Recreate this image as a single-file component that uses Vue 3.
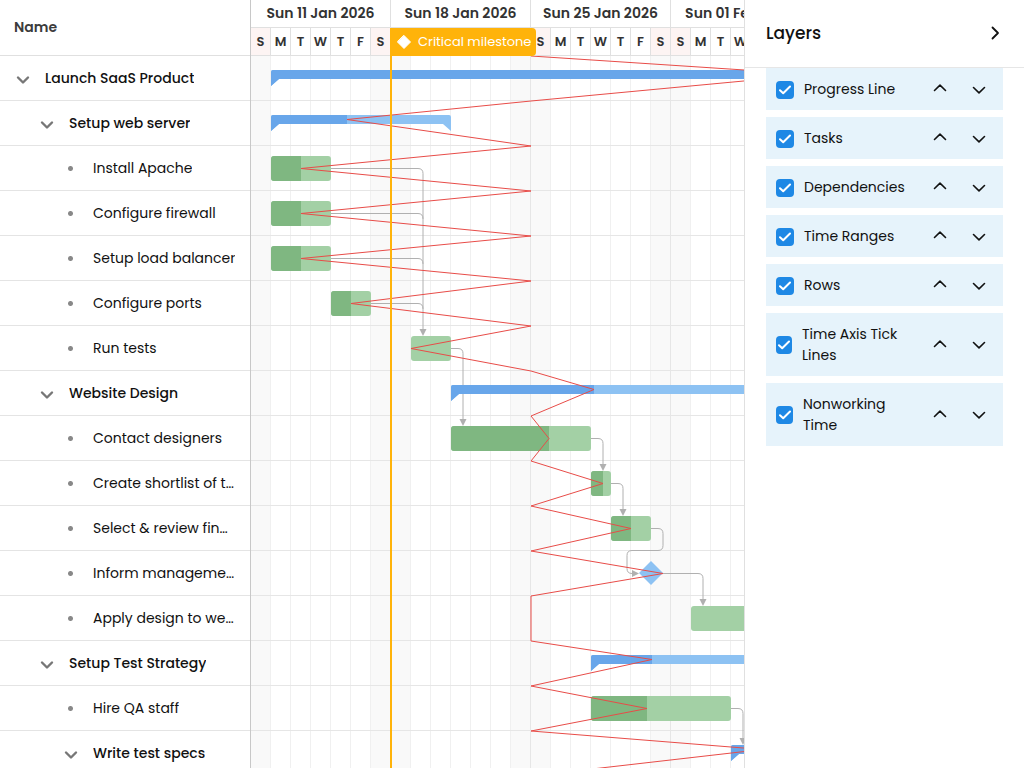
<script setup>
import { ref } from 'vue'

const rowHeight = 45
const dayWidth = 20

const rows = [
  { name: 'Launch SaaS Product', level: 0, parent: true, start: 20, width: 1100, done: 542 },
  { name: 'Setup web server', level: 1, parent: true, start: 20, width: 180, done: 76 },
  { name: 'Install Apache', level: 2, start: 20, width: 60, done: 30 },
  { name: 'Configure firewall', level: 2, start: 20, width: 60, done: 30 },
  { name: 'Setup load balancer', level: 2, start: 20, width: 60, done: 30 },
  { name: 'Configure ports', level: 2, start: 80, width: 40, done: 20 },
  { name: 'Run tests', level: 2, start: 160, width: 40, done: 0 },
  { name: 'Website Design', level: 1, parent: true, start: 200, width: 600, done: 143 },
  { name: 'Contact designers', level: 2, start: 200, width: 140, done: 98 },
  { name: 'Create shortlist of t…', level: 2, start: 340, width: 20, done: 12 },
  { name: 'Select & review fin…', level: 2, start: 360, width: 40, done: 20 },
  { name: 'Inform manageme…', level: 2, milestone: true, start: 400, width: 0, done: 12 },
  { name: 'Apply design to we…', level: 2, start: 440, width: 160, done: 0, noLine: true },
  { name: 'Setup Test Strategy', level: 1, parent: true, start: 340, width: 600, done: 61 },
  { name: 'Hire QA staff', level: 2, start: 340, width: 140, done: 56 },
  { name: 'Write test specs', level: 2, parent: true, start: 480, width: 300, done: 31 }
]

const weeks = ['Sun 11 Jan 2026', 'Sun 18 Jan 2026', 'Sun 25 Jan 2026', 'Sun 01 Feb 2026']
const days = weeks.flatMap(() => ['S', 'M', 'T', 'W', 'T', 'F', 'S'])
const isWeekend = (i) => i % 7 === 0 || i % 7 === 6
const bodyHeight = rows.length * rowHeight

const statusX = 280
const progressPoints = rows
  .flatMap((row, i) => {
    const top = i * rowHeight
    const first = [statusX, top]
    if (row.noLine) return [first]
    return [first, [row.start + row.done, top + (row.parent ? 18.5 : 22.5)]]
  })
  .concat([[statusX, bodyHeight]])
  .map((p) => p.join(','))
  .join(' ')

function summaryPath(row, i) {
  const x = row.start
  const y = i * rowHeight + 14
  const r = x + row.width
  return `M${x} ${y + 16}V${y + 2}q0-2 2-2H${r - 2}q2 0 2 2V${y + 16}l-8-7H${x + 8}Z`
}

// Links with "joins" merge into a vertical that an earlier link already draws.
const dropLinks = [
  { x: 80, row: 2, to: 172, end: 280 },
  { x: 80, row: 3, to: 172, joins: true },
  { x: 80, row: 4, to: 172, joins: true },
  { x: 120, row: 5, to: 172, joins: true },
  { x: 200, row: 6, to: 212, end: 370 },
  { x: 340, row: 8, to: 352, end: 415 },
  { x: 360, row: 9, to: 372, end: 460 },
  { x: 412, row: 11, to: 452, end: 550 },
  { x: 480, row: 14, to: 492, end: 689 }
]
const linkPath = (l) =>
  `M${l.x} ${l.row * rowHeight + 22.5}H${l.to - 5}q5 0 5 5` + (l.joins ? '' : `V${l.end - 6}`)

const layers = ref([
  { name: 'Progress Line', on: true, box: 18 },
  { name: 'Tasks', on: true, box: 18 },
  { name: 'Dependencies', on: true, box: 18 },
  { name: 'Time Ranges', on: true, box: 18 },
  { name: 'Rows', on: true, box: 18 },
  { name: 'Time Axis Tick Lines', on: true, box: 16 },
  { name: 'Nonworking Time', on: true, box: 17 }
])

function move(index, by) {
  const target = index + by
  if (target < 0 || target >= layers.value.length) return
  const [item] = layers.value.splice(index, 1)
  layers.value.splice(target, 0, item)
}
</script>

<template>
  <div class="app">
    <table class="tree">
      <thead>
        <tr><th scope="col">Name</th></tr>
      </thead>
      <tbody>
        <tr v-for="row in rows" :key="row.name">
          <td>
            <div class="cell" :class="'level' + row.level">
              <button v-if="row.parent" class="toggle" type="button" :aria-label="'Collapse ' + row.name">
                <svg width="14" height="10" viewBox="0 0 14 10"><path d="M2 2.5 7 7.5 12 2.5" /></svg>
              </button>
              <span v-else class="bullet"></span>
              <span class="name" :class="{ strong: row.parent }">{{ row.name }}</span>
            </div>
          </td>
        </tr>
      </tbody>
    </table>

    <main class="timeline">
      <div class="axis">
        <div class="weeks">
          <div v-for="week in weeks" :key="week" class="week">{{ week }}</div>
        </div>
        <div class="days">
          <div v-for="(day, i) in days" :key="i" class="day" :class="{ off: isWeekend(i) }">{{ day }}</div>
        </div>
      </div>
      <svg class="chart" :height="bodyHeight" width="100%">
        <g>
          <template v-for="(day, i) in days" :key="i">
            <rect v-if="isWeekend(i)" class="nonworking" :x="i * dayWidth" y="0" :width="dayWidth" :height="bodyHeight" />
          </template>
          <rect v-for="(day, i) in days" :key="'t' + i" :class="i % 7 === 6 ? 'major' : 'minor'" :x="(i + 1) * dayWidth - 1" y="0" width="1" :height="bodyHeight" />
          <rect v-for="(row, i) in rows" :key="'r' + i" class="major" x="0" :y="(i + 1) * rowHeight - 1" width="100%" height="1" />
        </g>
        <g class="links">
          <template v-for="l in dropLinks" :key="l.row">
            <path class="link" :d="linkPath(l)" />
            <path v-if="!l.joins" class="head" :d="`M${l.to - 3.5} ${l.end - 7}h7l-3.5 7z`" />
          </template>
          <path class="link" d="M400 472.5h7q5 0 5 5v12q0 5-5 5h-26q-5 0-5 5v13q0 5 5 5h2" />
          <path class="head" d="M381 514v7l7-3.5z" />
        </g>
        <g v-for="(row, i) in rows" :key="row.name">
          <template v-if="row.parent">
            <clipPath :id="'summary' + i"><path :d="summaryPath(row, i)" /></clipPath>
            <path class="summary" :d="summaryPath(row, i)" />
            <rect class="summary-done" :clip-path="`url(#summary${i})`" :x="row.start" :y="i * rowHeight + 14" :width="row.done" height="16" />
          </template>
          <path v-else-if="row.milestone" class="summary" :d="`M${row.start - 12} ${i * rowHeight + 22}l12-12 12 12-12 12z`" />
          <template v-else>
            <clipPath :id="'task' + i"><rect :x="row.start" :y="i * rowHeight + 10" :width="row.width" height="25" rx="3" /></clipPath>
            <rect class="task" :x="row.start" :y="i * rowHeight + 10" :width="row.width" height="25" rx="3" />
            <rect class="task-done" :clip-path="`url(#task${i})`" :x="row.start" :y="i * rowHeight + 10" :width="row.done" height="25" />
          </template>
        </g>
        <polyline class="progress" :points="progressPoints" />
      </svg>
      <div class="marker">
        <div class="marker-label">
          <svg width="14" height="14" viewBox="0 0 14 14"><path d="M7 0.5 13.5 7 7 13.5 0.5 7Z" fill="#fff" stroke="#fff" stroke-linejoin="round" /></svg>
          <span>Critical milestone</span>
        </div>
      </div>
    </main>

    <aside class="panel">
      <header class="panel-head">
        <h2>Layers</h2>
        <button class="icon" type="button" aria-label="Collapse panel">
          <svg width="10" height="14" viewBox="0 0 10 14"><path d="M2.5 1.5 8 7 2.5 12.5" /></svg>
        </button>
      </header>
      <ul class="layers">
        <li v-for="(layer, i) in layers" :key="layer.name">
          <label>
            <span class="check" :style="{ width: layer.box + 'px' }">
              <input v-model="layer.on" type="checkbox" />
              <svg v-if="layer.on" width="12" height="10" viewBox="0 0 12 10"><path d="M1 5.2 4.2 8.2 11 1.5" /></svg>
            </span>
            <span class="layer-name">{{ layer.name }}</span>
          </label>
          <button class="icon up" type="button" :aria-label="'Move up ' + layer.name" @click="move(i, -1)">
            <svg width="14" height="8" viewBox="0 0 14 8"><path d="M1.5 6.5 7 1.2 12.5 6.5" /></svg>
          </button>
          <button class="icon" type="button" :aria-label="'Move down ' + layer.name" @click="move(i, 1)">
            <svg width="14" height="8" viewBox="0 0 14 8"><path d="M1.5 1.5 7 6.8 12.5 1.5" /></svg>
          </button>
        </li>
      </ul>
    </aside>
  </div>
</template>

<style>
body {
  margin: 0;
  overflow: hidden;
}
</style>

<style scoped>
.app {
  display: flex;
  height: 100vh;
  overflow: hidden;
  background: #fff;
  color: #111;
  font-family: Poppins, Inter, "Open Sans", sans-serif;
  font-size: 14px;
}
.app * {
  box-sizing: border-box;
}
button {
  display: flex;
  align-items: center;
  justify-content: center;
  padding: 0;
  border: 0;
  background: none;
  color: inherit;
  cursor: pointer;
}
svg path {
  stroke-linecap: round;
  stroke-linejoin: round;
}

.tree {
  display: block;
  flex: none;
  width: 251px;
  border-right: 1px solid #c8c8c8;
  border-spacing: 0;
}
.tree thead,
.tree tbody,
.tree tr,
.tree td {
  display: block;
}
.tree th {
  display: flex;
  align-items: center;
  height: 56px;
  padding: 0 14px;
  border-bottom: 1px solid #e0e0e0;
  color: #3c3c3c;
  font-size: 14px;
  font-weight: 600;
}
.tree td {
  height: 45px;
  padding: 0;
  border-bottom: 1px solid #e4e4e4;
}
.cell {
  display: flex;
  align-items: center;
  gap: 15px;
  height: 45px;
  padding-right: 8px;
}
.level0 {
  padding-left: 15px;
}
.level1 {
  padding-left: 39px;
}
.level2 {
  padding-left: 63px;
}
.toggle {
  flex: none;
  width: 15px;
  height: 20px;
  padding-top: 2px;
}
.toggle path {
  fill: none;
  stroke: #777;
  stroke-width: 2.4;
}
.bullet {
  flex: none;
  width: 15px;
  height: 5px;
  background: radial-gradient(circle, #888 1px, #888 2px, transparent 3px) center no-repeat;
}
.name {
  overflow: hidden;
  line-height: 21px;
  white-space: nowrap;
}
.strong {
  font-weight: 500;
}

.timeline {
  position: relative;
  flex: 1;
  min-width: 0;
  overflow: hidden;
}
.axis {
  height: 56px;
  color: #333;
  font-weight: 600;
}
.weeks,
.days {
  display: flex;
  height: 28px;
  border-bottom: 1px solid #e0e0e0;
}
.week {
  display: flex;
  flex: none;
  align-items: center;
  justify-content: center;
  width: 140px;
  border-right: 1px solid #e0e0e0;
  font-size: 14px;
  white-space: nowrap;
}
.day {
  display: flex;
  flex: none;
  align-items: center;
  justify-content: center;
  width: 20px;
  border-right: 1px solid #e0e0e0;
  font-size: 13px;
}
.off {
  background: #fdf4f3;
}
.chart {
  display: block;
}
.nonworking {
  fill: #f9f9f9;
}
.minor {
  fill: #f0f0f0;
}
.major {
  fill: #e6e6e6;
}
.link {
  fill: none;
  stroke: #b0b0b0;
}
.head {
  fill: #b0b0b0;
}
.summary {
  fill: #8dc2f3;
}
.summary-done {
  fill: #68a6ea;
}
.task {
  fill: #a3d0a5;
}
.task-done {
  fill: #7fb781;
}
.progress {
  fill: none;
  stroke: #e84c48;
}
.marker {
  position: absolute;
  top: 28px;
  bottom: 0;
  left: 139px;
  border-left: 2px solid #ffb30a;
}
.marker-label {
  display: flex;
  align-items: center;
  gap: 7px;
  height: 28px;
  padding: 0 5px;
  border-radius: 0 4px 4px 0;
  background: #ffb30a;
  color: #fff;
  font-size: 13px;
  white-space: nowrap;
}

.panel {
  flex: none;
  width: 280px;
  border-left: 1px solid #e0e0e0;
  background: #fff;
}
.panel-head {
  display: flex;
  align-items: center;
  justify-content: space-between;
  height: 68px;
  padding: 0 21px 2px;
  border-bottom: 1px solid #e6e6e6;
}
h2 {
  margin: 0;
  font-size: 17px;
  font-weight: 500;
}
.icon {
  flex: none;
  width: 16px;
  height: 24px;
}
.icon path {
  fill: none;
  stroke: #111;
  stroke-width: 1.8;
}
.layers {
  display: flex;
  flex-direction: column;
  gap: 7px;
  margin: 0;
  padding: 0 21px;
  list-style: none;
}
.layers li {
  display: flex;
  align-items: center;
  padding: 11px 16px 10px 10px;
  background: #e6f3fb;
}
label {
  display: flex;
  flex: 1;
  align-items: center;
  gap: 10px;
}
.layer-name {
  max-width: 106px;
  line-height: 21px;
}
.check {
  position: relative;
  flex: none;
  height: 18px;
}
.check input {
  display: block;
  width: 100%;
  height: 18px;
  margin: 0;
  border-radius: 4px;
  background: #1e88e5;
  appearance: none;
}
.check input:not(:checked) {
  background: #fff;
}
.check svg {
  position: absolute;
  inset: 0;
  margin: auto;
}
.check path {
  fill: none;
  stroke: #fff;
  stroke-width: 2;
}
.layers .icon {
  height: 20px;
}
.layers .icon path {
  stroke-width: 1.6;
}
.layers .up {
  margin-right: 23px;
  padding-bottom: 3px;
}
</style>
